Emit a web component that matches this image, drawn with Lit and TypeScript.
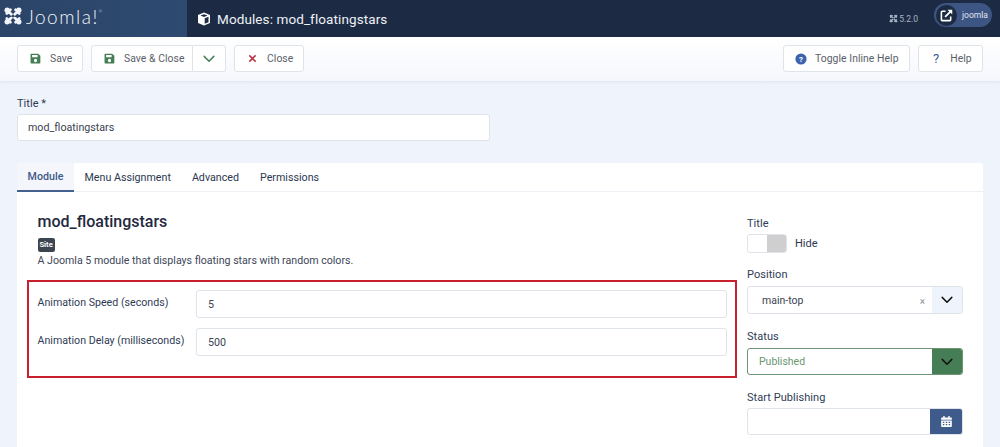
import { LitElement, html, css, svg } from "lit";
import { customElement } from "lit/decorators.js";

const saveIcon = html`<svg class="ic" viewBox="0 0 12 12" width="11" height="11"><path fill="#457d54" fill-rule="evenodd" d="M1.3 .7h7.6L11.3 3v7.7c0 .4-.3.7-.7.7H1.3c-.4 0-.7-.3-.7-.7V1.4c0-.4.3-.7.7-.7zM2.3 2.2v2.4h6V2.2zM6 6.4a1.8 1.8 0 1 0 0 3.6 1.8 1.8 0 0 0 0-3.6z"/></svg>`;
const chev = (c: string, w = 12) => html`<svg viewBox="0 0 12 8" width=${w} height=${Math.round(w * 0.67)}><path d="M1.2 1.4 6 6.2l4.8-4.8" fill="none" stroke=${c} stroke-width="1.5" stroke-linecap="round" stroke-linejoin="round"/></svg>`;
const jMark = (c: string, s: number, bg: string) => html`<svg viewBox="0 0 24 24" width=${s} height=${s}><g fill="none" stroke=${c} stroke-width="3.2" stroke-linecap="round">${svg`<path d="M6 6 18 18M18 6 6 18M9 4.500 4.500 9M19.500 15 15 19.500M15 4.500 19.500 9M4.500 15 9 19.500"/>`}</g><g fill=${c}>${svg`<circle cx="5" cy="5" r="3.200"/><circle cx="19" cy="5" r="3.200"/><circle cx="5" cy="19" r="3.200"/><circle cx="19" cy="19" r="3.200"/>`}</g><g fill=${bg}>${svg`<path d="M12 9.800 14.200 12 12 14.200 9.800 12z"/>`}</g></svg>`;

@customElement("app-root")
export class AppRoot extends LitElement {
  static styles = css`
    :host { display: block; width: 1000px; height: 447px; overflow: hidden; background: #eff3fb; font-family: Roboto, "Liberation Sans", sans-serif; font-size: 11px; color: #2b3750; }
    * { box-sizing: border-box; }
    .header { display: flex; height: 37px; background: #1c2b43; color: #fff; }
    .brand { width: 187px; display: flex; align-items: center; gap: 3px; padding: 0 0 5px 3px; background: linear-gradient(90deg, #2b4468, #2f4a70); }
    .wordmark { font-family: Lato, sans-serif; font-weight: 300; font-size: 19px; letter-spacing: 1.500px; line-height: 1; color: #f2f4f8; }
    .wordmark sup { font-size: 4px; vertical-align: 11px; letter-spacing: 0; }
    .page-title { display: flex; align-items: center; gap: 6px; padding-left: 10px; font-size: 13.500px; color: #eef1f6; flex: 1; letter-spacing: .1px; }
    .version { display: flex; align-items: center; gap: 1px; font-size: 8.500px; color: #a9b3c4; margin-right: 16px; }
    .user { display: flex; align-items: center; gap: 5px; width: 58px; height: 24px; margin: 3px 8px 0 0; border-radius: 12px; background: #3c5583; font-size: 8.500px; color: #e2e7f0; }
    .user-ic { width: 21px; height: 21px; margin-left: 2px; border-radius: 50%; background: #1c2b43; display: flex; align-items: center; justify-content: center; }
    .toolbar { display: flex; justify-content: space-between; height: 44px; padding: 8px 17px 0; background: linear-gradient(#fff, #f5f7fc); box-shadow: 0 1px 3px rgba(90,110,150,.1); }
    .group { display: flex; gap: 8px; }
    .btn { display: flex; align-items: center; height: 27px; background: #fff; border: 1px solid #dfe3ea; border-radius: 3px; color: #5a6069; font-size: 10.400px; white-space: nowrap; letter-spacing: .05px; }
    .btn.save { width: 66px; padding-left: 12px; gap: 9px; }
    .btn.saveclose { width: 102px; padding-left: 12px; gap: 9px; border-radius: 3px 0 0 3px; }
    .btn.drop { width: 33px; margin-left: -8px; border-left: 0; border-radius: 0 3px 3px 0; justify-content: center; }
    .btn.close { width: 70px; padding-left: 13px; gap: 10px; }
    .btn.toggle { width: 127px; padding-left: 11px; gap: 8px; }
    .btn.help { width: 65px; padding-left: 14px; gap: 11px; }
    .q { color: #3d5c94; font-size: 13px; }
    .main { padding: 15px 17px 0; }
    .lbl { display: block; font-size: 11px; line-height: 16px; color: #2f3b55; letter-spacing: .05px; }
    .input { display: flex; align-items: center; height: 28px; background: #fff; border: 1px solid #dfe3ea; border-radius: 3px; padding-left: 11px; font-size: 10.700px; color: #3b4252; }
    .title-input { width: 473px; height: 27px; margin-top: 2px; padding-left: 10px; }
    .card { margin-top: 22px; background: #fff; height: 300px; border-radius: 3px 3px 0 0; }
    .tabs { display: flex; height: 29px; border-bottom: 1px solid #eceff4; font-size: 10.700px; color: #2b3750; }
    .tab { display: flex; align-items: center; padding: 0 10.500px; }
    .tab.on { width: 57px; justify-content: center; padding: 0; color: #3f5a8a; font-weight: 500; background: #f4f6fb; border-bottom: 2px solid #45618f; height: 29px; }
    .body { display: flex; padding-top: 20px; }
    .left { width: 720px; padding-left: 10px; }
    .intro { padding-left: 10.500px; }
    h2 { margin: 0; font-size: 16px; line-height: 20px; font-weight: 500; color: #1f2a3e; }
    .badge { display: inline-block; margin-top: 6px; background: #3d4650; color: #fff; border-radius: 2px; font-size: 7.500px; font-weight: 700; line-height: 14px; height: 14px; padding: 0 2px; vertical-align: top; }
    .desc { font-size: 10.630px; line-height: 13px; margin-top: 2px; color: #3c4658; }
    .box { margin-top: 13px; width: 710px; height: 98px; border: 2px solid #c8202d; padding: 8px 8px 0 8.500px; display: flex; flex-direction: column; gap: 10px; }
    .row { display: flex; }
    .row label { width: 158.500px; padding-top: 5.500px; font-size: 10.650px; line-height: 14px; color: #2f3b55; white-space: nowrap; }
    .row .input { flex: 1; }
    .right { width: 216px; margin-left: 10px; margin-top: 4px; }
    .field { margin-bottom: 15px; }
    .sw { display: flex; align-items: center; gap: 8px; margin-top: 2px; margin-bottom: 14px; font-size: 11px; }
    .switch { display: flex; width: 40px; height: 19px; border: 1px solid #dfe3ea; border-radius: 3px; background: #fff; overflow: hidden; }
    .switch i { margin-left: 19px; flex: 1; background: #cfcfcf; }
    .combo { display: flex; align-items: stretch; height: 28px; margin-top: 3px; background: #fff; border: 1px solid #dfe3ea; border-radius: 3px; overflow: hidden; font-size: 10.500px; }
    .combo .val { flex: 1; display: flex; align-items: center; justify-content: space-between; }
    .combo .add { width: 30px; display: flex; align-items: center; justify-content: center; }
    .pos .val { padding: 0 7px 0 14px; color: #3b4252; }
    .pos .add { background: #eff3fb; }
    .x { color: #8a8f98; font-size: 10px; padding-top: 2px; }
    .status { border-color: #6d9475; height: 27px; }
    .status .val { padding-left: 11px; color: #6a9672; }
    .status .add { background: #457d54; }
    .cal { height: 27px; margin-top: 2px; }
    .cal .add { width: 32px; background: #3f5b8c; }
    .field.st { margin-bottom: 15px; }
  `;

  render() {
    return html`
      <div class="header">
        <div class="brand">${jMark("#f2f4f8", 20, "#2b4468")}<span class="wordmark">Joomla!<sup>®</sup></span></div>
        <div class="page-title">
          <svg viewBox="0 0 14 14" width="14" height="14"><path fill="#fff" d="M7 .6 13 3v8l-6 2.600L1 11V3zM7 2.200 3.400 3.600 7 5l3.600-1.400zM7.700 6.300v5.500l3.800-1.600V4.800z"/></svg>
          Modules: mod_floatingstars
        </div>
        <div class="version">${jMark("#a9b3c4", 9, "#1c2b43")}5.2.0</div>
        <div class="user">
          <span class="user-ic"><svg viewBox="0 0 14 14" width="13" height="13"><path fill="none" stroke="#fff" stroke-width="1.700" d="M6 2.500H2.500a1 1 0 0 0-1 1v8a1 1 0 0 0 1 1h8a1 1 0 0 0 1-1V8"/><path fill="none" stroke="#fff" stroke-width="1.900" d="M5.500 8.500 12 2"/><path fill="#fff" d="M8 .8h5.200V6z"/></svg></span>
          joomla
        </div>
      </div>
      <div class="toolbar">
        <div class="group">
          <div class="btn save">${saveIcon}<span>Save</span></div>
          <div class="btn saveclose">${saveIcon}<span>Save &amp; Close</span></div>
          <div class="btn drop">${chev("#457d54")}</div>
          <div class="btn close"><svg viewBox="0 0 10 10" width="9" height="9"><path d="M1.500 1.500l7 7m0-7-7 7" stroke="#b8303c" stroke-width="1.700" fill="none"/></svg><span>Close</span></div>
        </div>
        <div class="group">
          <div class="btn toggle"><svg viewBox="0 0 12 12" width="12" height="12"><circle cx="6" cy="6" r="5.600" fill="#3d63ad"/><text x="6" y="8.800" text-anchor="middle" font-size="8" font-weight="700" fill="#fff" font-family="Roboto">?</text></svg><span>Toggle Inline Help</span></div>
          <div class="btn help"><span class="q">?</span><span>Help</span></div>
        </div>
      </div>
      <div class="main">
        <label class="lbl">Title *</label>
        <div class="input title-input">mod_floatingstars</div>
        <div class="card">
          <div class="tabs">
            <div class="tab on">Module</div>
            <div class="tab">Menu Assignment</div>
            <div class="tab">Advanced</div>
            <div class="tab">Permissions</div>
          </div>
          <div class="body">
            <div class="left">
              <div class="intro">
                <h2>mod_floatingstars</h2>
                <span class="badge">Site</span>
                <div class="desc">A Joomla 5 module that displays floating stars with random colors.</div>
              </div>
              <div class="box">
                <div class="row"><label>Animation Speed (seconds)</label><div class="input">5</div></div>
                <div class="row"><label>Animation Delay (milliseconds)</label><div class="input">500</div></div>
              </div>
            </div>
            <div class="right">
              <label class="lbl">Title</label>
              <div class="sw"><div class="switch"><i></i></div>Hide</div>
              <div class="field">
                <label class="lbl">Position</label>
                <div class="combo pos"><div class="val"><span>main-top</span><span class="x">×</span></div><div class="add">${chev("#111")}</div></div>
              </div>
              <div class="field st">
                <label class="lbl">Status</label>
                <div class="combo status"><div class="val">Published</div><div class="add">${chev("#111")}</div></div>
              </div>
              <div class="field">
                <label class="lbl">Start Publishing</label>
                <div class="combo cal"><div class="val"></div><div class="add"><svg viewBox="0 0 12 12" width="11" height="11"><path fill="#fff" fill-rule="evenodd" d="M2.500 0h1.500v1.500h4V0h1.500v1.500h1.500a.8.8 0 0 1 .8.8v1.700H.2V2.300a.8.8 0 0 1 .8-.8h1.500zM.2 4.800h11.600v6.400a.8.8 0 0 1-.8.800H1a.8.8 0 0 1-.8-.8zM2 6.200v1.300h1.600V6.200zm3.200 0v1.300h1.600V6.200zm3.200 0v1.300H10V6.200zM2 8.800v1.300h1.600V8.800zm3.200 0v1.300h1.600V8.800zm3.200 0v1.300H10V8.800z"/></svg></div></div>
              </div>
            </div>
          </div>
        </div>
      </div>
    `;
  }
}
